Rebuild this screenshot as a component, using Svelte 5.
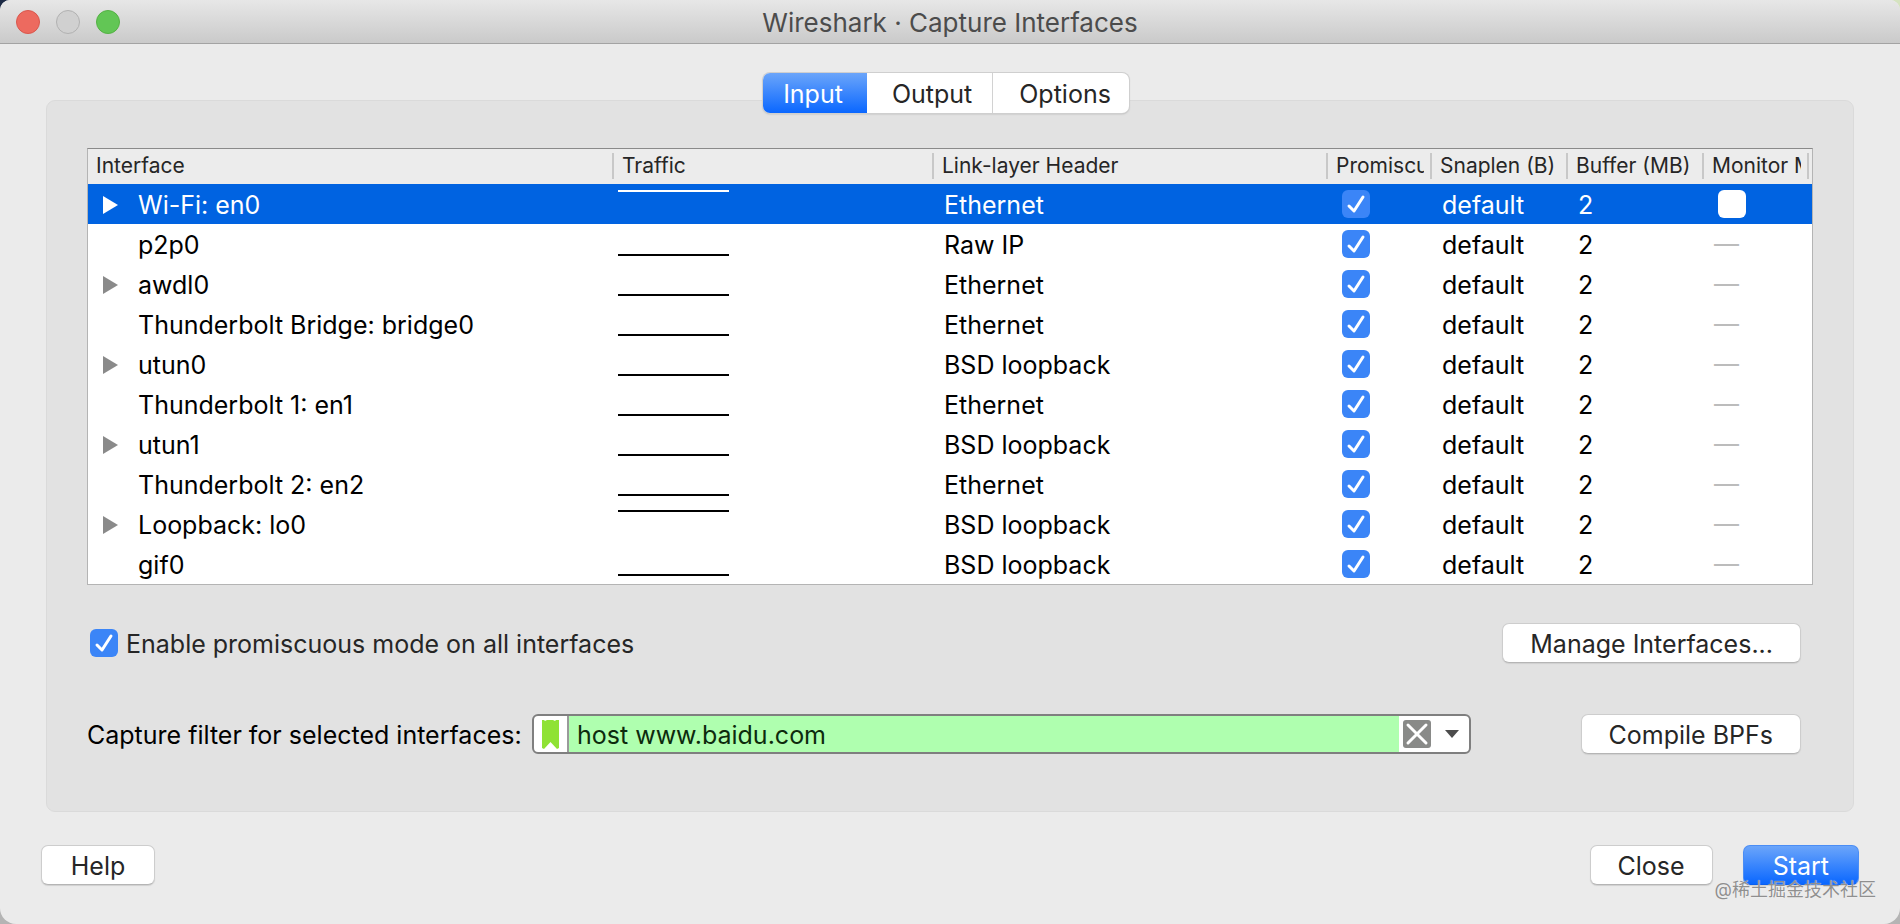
<script lang="ts">
	interface Iface {
		name: string;
		link: string;
		active?: boolean;
		expandable?: boolean;
		monitor?: boolean;
	}

	const tabs = ['Input', 'Output', 'Options'];
	const columns = [
		'Interface',
		'Traffic',
		'Link-layer Header',
		'Promiscuous',
		'Snaplen (B)',
		'Buffer (MB)',
		'Monitor Mode'
	];
	const interfaces: Iface[] = [
		{ name: 'Wi-Fi: en0', link: 'Ethernet', active: true, expandable: true, monitor: true },
		{ name: 'p2p0', link: 'Raw IP' },
		{ name: 'awdl0', link: 'Ethernet', expandable: true },
		{ name: 'Thunderbolt Bridge: bridge0', link: 'Ethernet' },
		{ name: 'utun0', link: 'BSD loopback', expandable: true },
		{ name: 'Thunderbolt 1: en1', link: 'Ethernet' },
		{ name: 'utun1', link: 'BSD loopback', expandable: true },
		{ name: 'Thunderbolt 2: en2', link: 'Ethernet' },
		{ name: 'Loopback: lo0', link: 'BSD loopback', active: true, expandable: true },
		{ name: 'gif0', link: 'BSD loopback' }
	];

	let activeTab = $state('Input');
	let selected = $state('Wi-Fi: en0');
	let filter = $state('host www.baidu.com');
</script>

<div class="window">
	<header class="titlebar">
		<div class="lights">
			<button class="light close" aria-label="Close window"></button>
			<button class="light minimize" aria-label="Minimize window" disabled></button>
			<button class="light zoom" aria-label="Zoom window"></button>
		</div>
		<h1>Wireshark · Capture Interfaces</h1>
	</header>

	<main>
		<div class="tab-bar">
			<div class="tabs" role="tablist">
				{#each tabs as tab}
					<button
						class="tab"
						class:active={activeTab === tab}
						role="tab"
						aria-selected={activeTab === tab}
						onclick={() => (activeTab = tab)}
					>
						{tab}
					</button>
				{/each}
			</div>
		</div>

		<section class="panel">
			<div class="table-frame">
				<table>
					<colgroup>
						<col class="col-name" />
						<col class="col-traffic" />
						<col />
						<col class="col-promisc" />
						<col class="col-size" />
						<col class="col-size" />
						<col class="col-monitor" />
					</colgroup>
					<thead>
						<tr>
							{#each columns as column}
								<th><div class="head"><span>{column}</span></div></th>
							{/each}
						</tr>
					</thead>
					<tbody>
						{#each interfaces as iface}
							<tr class:selected={selected === iface.name} onclick={() => (selected = iface.name)}>
								<td>
									<div class="name">
										{#if iface.expandable}
											<button class="expander" aria-label="Expand {iface.name}">
												<svg viewBox="0 0 15 18" width="15" height="18"><path d="M0 0 15 9 0 18z" /></svg>
											</button>
										{/if}
										<span>{iface.name}</span>
									</div>
								</td>
								<td class="traffic">
									<svg width="111" height="40" viewBox="0 0 111 40">
										<path d={iface.active ? 'M0 7H111' : 'M0 31H111'} />
									</svg>
								</td>
								<td class="text">{iface.link}</td>
								<td class="tick"><input type="checkbox" checked aria-label="Promiscuous {iface.name}" /></td>
								<td class="text">default</td>
								<td class="text">2</td>
								<td class="monitor">
									{#if iface.monitor}
										<input type="checkbox" aria-label="Monitor mode {iface.name}" />
									{:else}
										<span>—</span>
									{/if}
								</td>
							</tr>
						{/each}
					</tbody>
				</table>
			</div>

			<div class="row">
				<label class="promisc-all">
					<input type="checkbox" checked />
					<span>Enable promiscuous mode on all interfaces</span>
				</label>
				<button class="btn">Manage Interfaces...</button>
			</div>

			<div class="row filter-row">
				<label class="filter-label" for="capture-filter">Capture filter for selected interfaces:</label>
				<div class="combo">
					<button class="bookmark" aria-label="Filter bookmarks">
						<svg viewBox="0 0 17 30" width="17" height="30">
							<path d="M0 1h2l1 1 2-1h6l2 1 1-1h3v28l-2 1-6.500-7L2 30l-2-1z" fill="#8fe234" />
						</svg>
					</button>
					<input id="capture-filter" type="text" bind:value={filter} spellcheck="false" />
					<button class="clear" aria-label="Clear filter" onclick={() => (filter = '')}>
						<svg viewBox="0 0 28 28" width="28" height="28">
							<rect width="28" height="28" rx="3" fill="#898a88" />
							<path d="M5 5 23 23M23 5 5 23" stroke="#fff" stroke-width="3" stroke-linecap="round" />
						</svg>
					</button>
					<button class="history" aria-label="Recent filters" aria-haspopup="listbox">
						<svg viewBox="0 0 14 8" width="14" height="8"><path d="M0 0h14L7 8z" fill="#4c4c4c" /></svg>
					</button>
				</div>
				<button class="btn">Compile BPFs</button>
			</div>
		</section>

		<footer>
			<button class="btn">Help</button>
			<div class="actions">
				<button class="btn">Close</button>
				<button class="btn primary">Start</button>
			</div>
		</footer>
	</main>

	<span class="watermark">@稀土掘金技术社区</span>
</div>

<style>
	:global(body) {
		margin: 0;
		background:
			linear-gradient(90deg, #1d2b45 50%, #d5e3c0 50%) top / 100% 20px no-repeat,
			#b4b4b4;
	}

	.window {
		position: relative;
		box-sizing: border-box;
		min-height: 100vh;
		background: #ebebeb;
		border-radius: 10px 10px 16px 16px;
		overflow: hidden;
		font-family: Inter, 'Liberation Sans', 'Noto Sans CJK SC', sans-serif;
		font-size: 25px;
		line-height: 30px;
		color: #262626;
	}

	button,
	input {
		margin: 0;
		padding: 0;
		border: 0;
		background: none;
		font: inherit;
		color: inherit;
	}

	.titlebar {
		display: grid;
		grid-template-columns: 1fr auto 1fr;
		align-items: center;
		height: 43px;
		background: linear-gradient(#e7e7e7, #cacaca);
		border-bottom: 1px solid #a3a3a3;
	}

	.lights {
		display: flex;
		gap: 16px;
		padding-left: 16px;
	}

	.light {
		width: 24px;
		height: 24px;
		border: 1px solid #d9574d;
		border-radius: 50%;
		background: #ed6a5f;
	}

	.light.minimize {
		border-color: #b1b1b1;
		background: #d0d0d0;
	}

	.light.zoom {
		border-color: #54b144;
		background: #62c655;
	}

	h1 {
		margin: 0;
		padding-top: 2px;
		font-size: 26px;
		font-weight: 400;
		color: #4c4c4c;
	}

	main {
		padding: 29px 41px 39px;
	}

	.tab-bar {
		position: relative;
		display: flex;
		justify-content: center;
		margin-bottom: -13px;
		padding-right: 8px;
	}

	.tabs {
		display: flex;
		background: #fff;
		border-radius: 7px;
		box-shadow: 0 0 0 1px #cfcfcf, 0 1px 2px #aaa;
		overflow: hidden;
	}

	.tab {
		height: 40px;
		padding: 2px 20px 0 25px;
		color: #262626;
	}

	.tab:first-child {
		padding: 2px 24px 0 20px;
	}

	.tab:last-child {
		padding: 2px 18px 0 26px;
		border-left: 1px solid #d2d2d2;
	}

	.tab.active {
		background: linear-gradient(#6ba5fa, #0a67ff);
		color: #fff;
	}

	.panel {
		margin: 0 5px;
		padding: 47px 40px 57px;
		background: #e2e2e2;
		border: 1px solid #dadada;
		border-radius: 9px;
	}

	.table-frame {
		background: #fff;
		border: 1px solid #b4b4b4;
		border-top-color: #8a8a8a;
	}

	table {
		width: 100%;
		table-layout: fixed;
		border-collapse: collapse;
		color: #000;
	}

	.col-name { width: 526px; }
	.col-traffic { width: 320px; }
	.col-promisc { width: 104px; }
	.col-size { width: 136px; }
	.col-monitor { width: 108px; }

	th {
		padding: 4px 0 5px;
		background: #ececec;
		font-size: 21px;
		font-weight: 400;
		text-align: left;
		color: #262626;
	}

	.head {
		height: 26px;
		padding: 0 6px 0 8px;
		border-right: 2px solid #c8c8c8;
		line-height: 26px;
	}

	.head span {
		display: block;
		overflow: hidden;
		white-space: nowrap;
	}

	th:last-child .head {
		margin-right: 3px;
	}

	td {
		box-sizing: border-box;
		height: 40px;
		padding: 0;
		white-space: nowrap;
	}

	tr.selected {
		background: #0063e1;
		color: #fff;
	}

	.text {
		padding: 1px 0 0 10px;
	}

	.name {
		display: grid;
		grid-template-columns: 15px 1fr;
		gap: 20px;
		align-items: center;
		padding: 1px 0 0 15px;
	}

	.name span {
		grid-column: 2;
	}

	.expander {
		display: flex;
		fill: #8a8a8a;
	}

	.selected .expander {
		fill: #fff;
	}

	.traffic {
		padding-left: 4px;
	}

	.traffic svg {
		display: block;
		stroke: #000;
		stroke-width: 2;
	}

	.selected .traffic svg {
		stroke: #fff;
	}

	.tick {
		padding-left: 14px;
	}

	.monitor {
		padding-left: 10px;
		color: #bcbcbc;
	}

	.monitor input {
		margin-left: 4px;
	}

	input[type='checkbox'] {
		appearance: none;
		display: block;
		flex: none;
		width: 28px;
		height: 28px;
		border-radius: 6px;
		background: #fff;
	}

	input[type='checkbox']:checked {
		background: #3b85f7 url("data:image/svg+xml,%3Csvg xmlns='http://www.w3.org/2000/svg' viewBox='0 0 28 28'%3E%3Cpath d='M7 16l5 5L21 7' fill='none' stroke='%23fff' stroke-width='3' stroke-linecap='round' stroke-linejoin='round'/%3E%3C/svg%3E");
	}

	.row {
		display: flex;
		align-items: center;
		justify-content: space-between;
		margin-top: 38px;
		padding-right: 12px;
	}

	.promisc-all {
		display: flex;
		align-items: center;
		gap: 8px;
		padding-left: 3px;
	}

	.promisc-all span,
	.filter-label {
		padding-top: 2px;
	}

	.filter-row {
		margin-top: 51px;
	}

	.filter-label {
		width: 445px;
		white-space: nowrap;
		color: #000;
	}

	.combo {
		display: flex;
		flex: 1;
		box-sizing: border-box;
		height: 40px;
		margin-right: 110px;
		background: #fff;
		border: 2px solid #7f7f7f;
		border-radius: 6px;
		overflow: hidden;
	}

	.combo button {
		display: flex;
		align-items: center;
		justify-content: center;
	}

	.bookmark {
		width: 35px;
		border-right: 2px solid #9a9a9a;
	}

	.combo input {
		flex: 1;
		min-width: 0;
		padding: 1px 8px 0;
		background: #afffaf;
		color: #0d2b0d;
	}

	.combo .clear {
		width: 36px;
	}

	.combo .history {
		width: 34px;
	}

	.btn {
		min-width: 114px;
		height: 40px;
		padding: 2px 27px 0;
		background: #fff;
		border: 1px solid #cdcdcd;
		border-bottom-color: #b5b5b5;
		border-radius: 7px;
		box-shadow: 0 1px 1px #d0d0d0;
	}

	.btn.primary {
		padding: 2px 29px 0;
		background: linear-gradient(#6ba5fa, #0a67ff);
		border-color: #4a8df5;
		border-bottom-color: #0a5ff0;
		color: #fff;
	}

	footer {
		display: flex;
		justify-content: space-between;
		margin-top: 33px;
	}

	.actions {
		display: flex;
		gap: 30px;
	}

	.watermark {
		position: absolute;
		right: 24px;
		bottom: 20px;
		font-size: 18px;
		line-height: 28px;
		color: #8f8f8f;
		text-shadow: 0 0 1px #fff;
		pointer-events: none;
	}
</style>
